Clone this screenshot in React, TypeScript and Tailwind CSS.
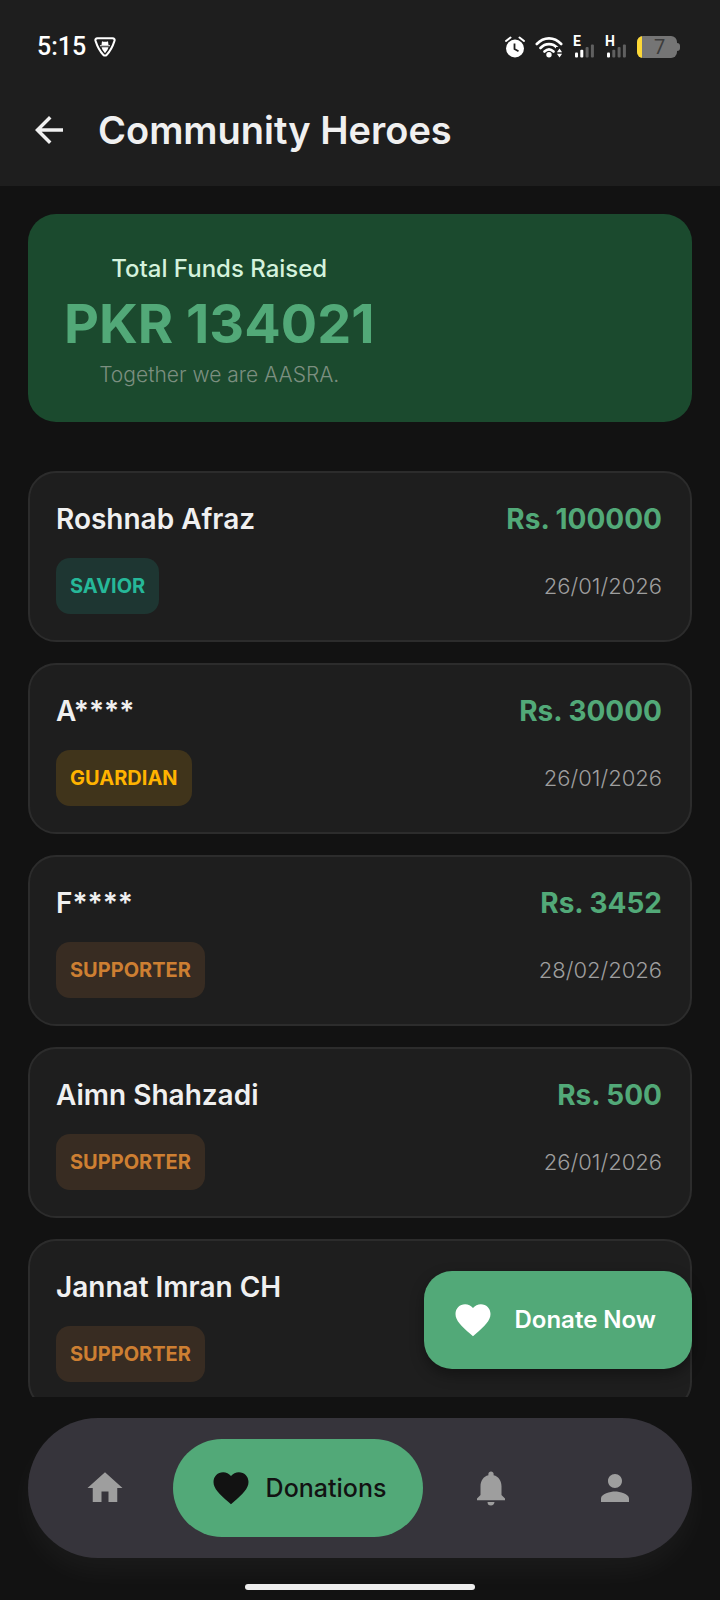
import clsx from 'clsx';
import { MdArrowBack, MdFavorite, MdHome, MdNotifications, MdPerson } from 'react-icons/md';

type Tier = 'SAVIOR' | 'GUARDIAN' | 'SUPPORTER';

interface Donor {
  name: string;
  amount: number;
  tier: Tier;
  date: string;
}

const donors: Donor[] = [
  { name: 'Roshnab Afraz', amount: 100000, tier: 'SAVIOR', date: '26/01/2026' },
  { name: 'A****', amount: 30000, tier: 'GUARDIAN', date: '26/01/2026' },
  { name: 'F****', amount: 3452, tier: 'SUPPORTER', date: '28/02/2026' },
  { name: 'Aimn Shahzadi', amount: 500, tier: 'SUPPORTER', date: '26/01/2026' },
  { name: 'Jannat Imran CH', amount: 39, tier: 'SUPPORTER', date: '26/01/2026' },
];

const tierStyles: Record<Tier, string> = {
  SAVIOR: 'bg-[#1e3632] text-[#26b899]',
  GUARDIAN: 'bg-[#40341b] text-[#ffb300]',
  SUPPORTER: 'bg-[#382c22] text-[#cd7f32]',
};

const ShieldIcon = () => (
  <svg viewBox="0 0 22 20" className="h-5 w-[22px]" fill="none" aria-hidden="true">
    <path
      d="M3.5 1.2h15c1.7 0 2.6 1.4 1.9 2.9-1.5 4.6-4 9.8-7.6 13.6-1.1 1.2-2.5 1.2-3.6 0C5.6 13.900 3.1 8.700 1.600 4.100.9 2.600 1.800 1.200 3.500 1.200z"
      stroke="currentColor"
      strokeWidth="2"
    />
    <path d="M8 4.300l1.300.5h3.400l1.300-.5.5 3.700h-7zM6 8.200h10v1H6zM7.500 10.200h7l-1 2.600-2.500 3.400-2.500-3.400z" fill="currentColor" />
  </svg>
);

const AlarmIcon = () => (
  <svg viewBox="0 0 20 22" className="h-[22px] w-5" fill="none" aria-hidden="true">
    <circle cx="10" cy="12.500" r="9" fill="currentColor" />
    <path d="M1 5l4.500-3.500M19 5l-4.500-3.500" stroke="currentColor" strokeWidth="2" strokeLinecap="round" />
    <path d="M9.500 7.500V13l4 2.200" stroke="#1e1e1e" strokeWidth="1.800" />
  </svg>
);

const WifiIcon = () => (
  <svg viewBox="0 0 28 22" className="h-[22px] w-7" fill="none" aria-hidden="true">
    <path
      d="M1.800 8c7-7.500 17.400-7.500 24.400 0M5.500 12c4.800-5.200 12.200-5.200 17 0M9.500 15.500c2.800-2.600 6.200-2.600 9 0"
      stroke="currentColor"
      strokeWidth="2.600"
      strokeLinecap="round"
    />
    <circle cx="14" cy="18.800" r="2.700" fill="currentColor" />
    <path d="M21 11h7v11h-7z" fill="#1e1e1e" />
    <path d="M24.500 12.600l2.600 3.600h-5.200zM24.500 21.400l2.600-3.600h-5.200z" fill="currentColor" />
  </svg>
);

const SignalIcon = ({ network, bars }: { network: string; bars: number }) => (
  <div className="flex h-6 w-[22px] flex-col">
    <span className="font-[Roboto,sans-serif] text-sm leading-3 font-bold">{network}</span>
    <svg viewBox="0 0 22 15" className="-mt-1 h-[15px] w-[22px]" aria-hidden="true">
      {[0, 1, 2, 3].map((i) => (
        <rect
          key={i}
          x={2 + i * 5.300}
          y={9.500 - i * 2.700}
          width="3"
          height={5 + i * 2.700}
          rx="1"
          fill={i < bars ? '#ffffff' : '#606060'}
        />
      ))}
    </svg>
  </div>
);

const BatteryIcon = ({ level }: { level: number }) => (
  <div className="flex items-center">
    <div className="flex h-[22px] w-10 overflow-hidden rounded-md bg-[#757575]">
      <div className="w-[5px] bg-[#fdd835]" />
      <span className="flex-1 text-center font-[Roboto,sans-serif] text-xl leading-[23px] text-[#3c3c3c]">{level}</span>
    </div>
    <div className="h-2 w-[3px] rounded-r bg-[#757575]" />
  </div>
);

const StatusBar = () => (
  <div className="flex h-[94px] items-center justify-between pr-10 pl-[37px] text-white">
    <div className="flex items-center gap-2">
      <span className="font-[Roboto,sans-serif] text-[25px] leading-8 font-medium">5:15</span>
      <ShieldIcon />
    </div>
    <div className="flex items-center gap-[10px]">
      <AlarmIcon />
      <WifiIcon />
      <SignalIcon network="E" bars={2} />
      <SignalIcon network="H" bars={1} />
      <BatteryIcon level={7} />
    </div>
  </div>
);

const FundsBanner = () => (
  <section className="flex h-[208px] items-center rounded-[28px] bg-[#1b4a2e] px-9 pt-1">
    <div className="flex flex-col items-center">
      <h2 className="text-2xl leading-8 font-medium text-[#d4f2dc]">Total Funds Raised</h2>
      <p className="text-[54px] leading-[78px] font-bold text-[#52a978]">PKR 134021</p>
      <p className="text-[21px] leading-6 font-light text-[#7c8f80]">Together we are AASRA.</p>
    </div>
  </section>
);

const DonorCard = ({ donor }: { donor: Donor }) => (
  <li className="rounded-[28px] border-2 border-[#2c2c2c] bg-[#1e1e1e] py-[26px] pr-7 pl-[26px]">
    <div className="flex items-center justify-between">
      <h3 className="text-[28px] leading-10 font-semibold text-[#f0f0f0]">{donor.name}</h3>
      <span className="text-[28px] leading-10 font-bold text-[#52a978]">Rs. {donor.amount}</span>
    </div>
    <div className="mt-[19px] flex items-center justify-between">
      <span
        className={clsx(
          'rounded-[14px] px-[14px] text-xl leading-[56px] font-bold',
          tierStyles[donor.tier],
        )}
      >
        {donor.tier}
      </span>
      <time className="text-[22px] leading-7 font-light text-[#9e9e9e]">{donor.date}</time>
    </div>
  </li>
);

const navItems = [
  { label: 'Home', icon: MdHome },
  { label: 'Donations', icon: MdFavorite },
  { label: 'Notifications', icon: MdNotifications },
  { label: 'Profile', icon: MdPerson },
];

const BottomNav = ({ active }: { active: string }) => (
  <nav className="mx-7 mt-[21px] flex h-[140px] items-center gap-3 rounded-full bg-[#36343b] px-[21px] shadow-[0_14px_28px_rgba(255,255,255,0.04)]">
    {navItems.map(({ label, icon: Icon }) =>
      label === active ? (
        <button
          key={label}
          type="button"
          aria-current="page"
          className="flex h-[98px] w-[250px] items-center justify-center gap-[14px] rounded-full bg-[#52a978] text-[#121212]"
        >
          <Icon size={42} />
          <span className="text-[25px] leading-8 font-medium">{label}</span>
        </button>
      ) : (
        <button
          key={label}
          type="button"
          aria-label={label}
          className="flex h-[98px] flex-1 items-center justify-center text-[#9e9e9e]"
        >
          <Icon size={42} />
        </button>
      ),
    )}
  </nav>
);

export default function App() {
  return (
    <div className="flex h-screen flex-col bg-[#121212] font-[Inter,sans-serif]">
      <header className="bg-[#1e1e1e] pb-6">
        <StatusBar />
        <div className="flex h-[68px] items-center gap-7 px-7 pt-1">
          <button type="button" aria-label="Back" className="text-[#f0f0f0]">
            <MdArrowBack size={42} />
          </button>
          <h1 className="text-[38px] leading-[48px] font-semibold text-[#f0f0f0]">Community Heroes</h1>
        </div>
      </header>

      <div className="relative flex min-h-0 flex-1 flex-col">
        <main className="flex-1 overflow-y-auto px-7 pt-7 [scrollbar-width:none]">
          <FundsBanner />
          <ul className="mt-[49px] flex flex-col gap-[21px] pb-36">
            {donors.map((donor) => (
              <DonorCard key={donor.name} donor={donor} />
            ))}
          </ul>
        </main>
        <button
          type="button"
          className="absolute right-7 bottom-7 flex h-[98px] items-center gap-5 rounded-[28px] bg-[#52a978] pr-9 pl-7 text-white shadow-[0_6px_14px_rgba(0,0,0,0.35)]"
        >
          <MdFavorite size={42} />
          <span className="text-2xl leading-8 font-semibold">Donate Now</span>
        </button>
      </div>

      <footer>
        <BottomNav active="Donations" />
        <div className="mx-auto mt-[26px] mb-[10px] h-[6px] w-[230px] rounded-full bg-[#eeeeee]" />
      </footer>
    </div>
  );
}
